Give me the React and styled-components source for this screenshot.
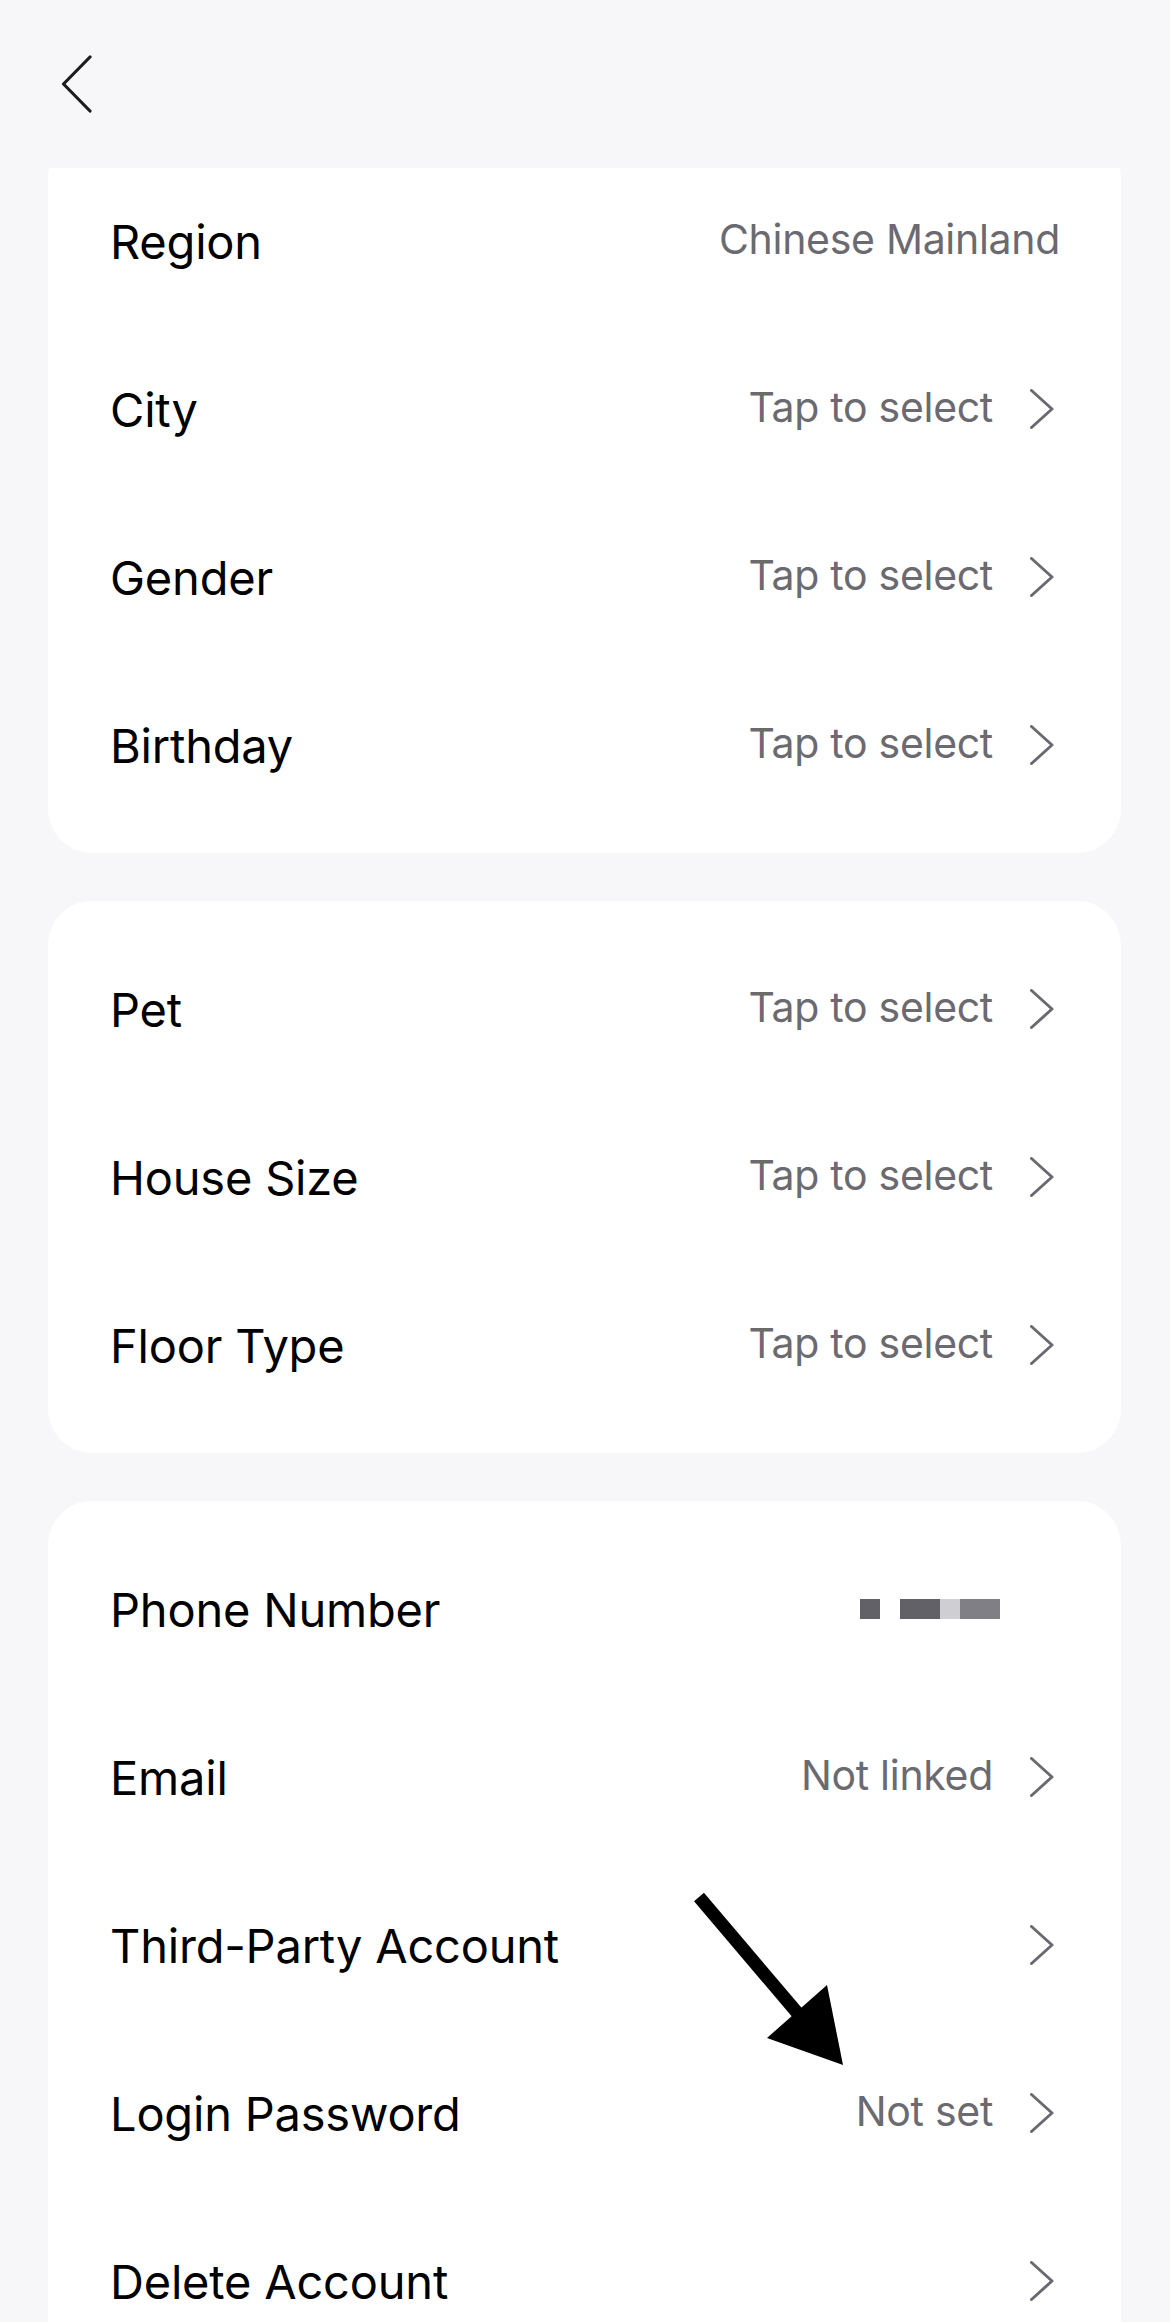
import React from 'react';
import styled, { createGlobalStyle } from 'styled-components';

const GlobalStyle = createGlobalStyle`
  html, body {
    margin: 0;
    padding: 0;
    background: #f7f7fa;
  }
  body {
    font-family: Inter, "Liberation Sans", Arial, sans-serif;
    -webkit-font-smoothing: antialiased;
  }
`;

const Page = styled.div`
  position: relative;
  min-height: 2322px;
  background: #f7f7fa;
  padding: 0 49px 0 48px;
  overflow: hidden;
`;

const Header = styled.div`
  position: relative;
  z-index: 1;
  height: 168px;
  margin: 0 -49px -35px -48px;
  padding-left: 60px;
  display: flex;
  align-items: center;
  background: #f7f7fa;
`;

const BackButton = styled.button`
  border: 0;
  padding: 0;
  background: transparent;
  display: flex;
  width: 34px;
  height: 58px;
`;

const Card = styled.section`
  background: #ffffff;
  border-radius: 44px;
  padding: 24px 0;
  margin-bottom: 48px;
`;

const Row = styled.div`
  display: flex;
  align-items: center;
  height: 168px;
  padding: 0 61px 0 62px;
`;

const Label = styled.span`
  flex: 1;
  font-size: 47px;
  letter-spacing: -0.2px;
  color: #000000;
  white-space: nowrap;
`;

const Value = styled.span`
  font-size: 41px;
  letter-spacing: -0.3px;
  color: #6b6a70;
  padding-bottom: 5px;
  white-space: nowrap;
`;

const ChevronBox = styled.svg`
  flex: none;
  width: 30px;
  height: 40px;
  margin-left: 37px;
`;

const Redacted = styled.div`
  display: flex;
  height: 20px;
  margin-right: 60px;
`;

const Pixel = styled.span`
  width: ${(p) => p.w}px;
  height: 20px;
  background: ${(p) => p.c};
`;

const Pointer = styled.svg`
  position: absolute;
  left: 680px;
  top: 1880px;
  width: 180px;
  height: 200px;
  z-index: 2;
`;

const Chevron = () => (
  <ChevronBox viewBox="0 0 30 40">
    <polyline
      points="1.5,1.5 22,20 1.5,38.5"
      fill="none"
      stroke="#6b6a70"
      strokeWidth="3"
      strokeLinecap="round"
      strokeLinejoin="round"
    />
  </ChevronBox>
);

const SettingRow = ({ label, value, arrow = true, children }) => (
  <Row>
    <Label>{label}</Label>
    {value && <Value>{value}</Value>}
    {children}
    {arrow && <Chevron />}
  </Row>
);

const profileRows = [
  { label: 'City', value: 'Tap to select' },
  { label: 'Gender', value: 'Tap to select' },
  { label: 'Birthday', value: 'Tap to select' },
];

const homeRows = [
  { label: 'Pet', value: 'Tap to select' },
  { label: 'House Size', value: 'Tap to select' },
  { label: 'Floor Type', value: 'Tap to select' },
];

const accountRows = [
  { label: 'Email', value: 'Not linked' },
  { label: 'Third-Party Account' },
  { label: 'Login Password', value: 'Not set' },
  { label: 'Delete Account' },
];

export default function App() {
  return (
    <Page>
      <GlobalStyle />
      <Header>
        <BackButton aria-label="Back">
          <svg width="34" height="58" viewBox="0 0 34 58">
            <polyline
              points="30,2 3.5,29 30,56"
              fill="none"
              stroke="#1c1c1e"
              strokeWidth="3.2"
              strokeLinecap="round"
              strokeLinejoin="round"
            />
          </svg>
        </BackButton>
      </Header>

      <Card>
        <SettingRow label="Region" value="Chinese Mainland" arrow={false} />
        {profileRows.map((r) => (
          <SettingRow key={r.label} label={r.label} value={r.value} />
        ))}
      </Card>

      <Card>
        {homeRows.map((r) => (
          <SettingRow key={r.label} label={r.label} value={r.value} />
        ))}
      </Card>

      <Card>
        <SettingRow label="Phone Number" arrow={false}>
          <Redacted>
            <Pixel w={20} c="#626167" />
            <Pixel w={20} c="#ffffff" />
            <Pixel w={40} c="#626167" />
            <Pixel w={20} c="#cfced2" />
            <Pixel w={40} c="#807f85" />
          </Redacted>
        </SettingRow>
        {accountRows.map((r) => (
          <SettingRow key={r.label} label={r.label} value={r.value} />
        ))}
      </Card>

      <Pointer viewBox="0 0 180 200">
        <line x1="19" y1="17" x2="120" y2="136" stroke="#000" strokeWidth="13" />
        <polygon points="87,158 147,105 163,185" fill="#000" />
      </Pointer>
    </Page>
  );
}
